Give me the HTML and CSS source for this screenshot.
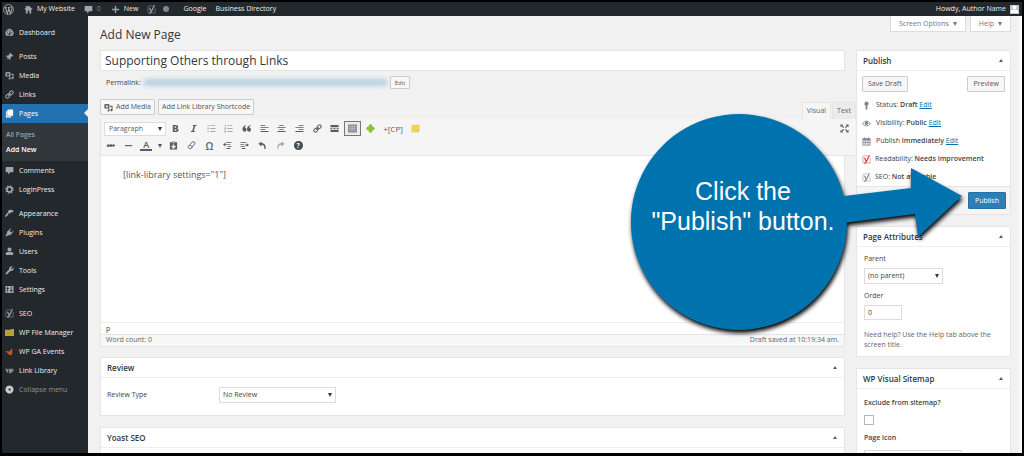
FILE: index.html
```html
<!DOCTYPE html>
<html lang="en">

<head>
    <meta charset="UTF-8">
    <meta name="viewport" content="width=device-width, initial-scale=1.0">
    <title>Add New Page</title>
    <link rel="stylesheet" href="styles.css">
</head>

<body>

    <!-- icons -->
    <svg class="sprite" aria-hidden="true">
        <symbol id="wordpress" viewBox="0 0 20 20"><circle cx="10" cy="10" r="9" fill="none" stroke="currentColor" stroke-width="1.5"/><path d="M3 6.500h4M9 6.500h4M4.500 7l3.500 10L10.500 9.500M10 7l3.500 10L16.500 8.500c.3-1.500-2-2-1.500-4.500" fill="none" stroke="currentColor" stroke-width="2"/></symbol>
        <symbol id="home" viewBox="0 0 20 20"><path d="M10 1l9 8-1.500 1.700L16 9.500V19h-4v-6H8v6H4V9.500l-1.500 1.200L1 9l3-2.700V2h3v1.700z"/></symbol>
        <symbol id="comment" viewBox="0 0 20 20"><path d="M3 2h14q1.500 0 1.500 1.500v9q0 1.500-1.500 1.500h-5l-5 5v-5H3q-1.500 0-1.500-1.500v-9Q1.500 2 3 2z"/></symbol>
        <symbol id="add" viewBox="0 0 20 20"><path d="M8.500 2h3v6.500H18v3h-6.500V18h-3v-6.500H2v-3h6.500z"/></symbol>
        <symbol id="yoast" viewBox="0 0 20 20"><path d="M13 2H5Q2 2 2 5v10q0 3 3 3h13V6" fill="none" stroke="currentColor" stroke-width="1"/><path d="M5.500 6l4 8.500M16.500 0L10 14.500Q8.500 18 5 18" fill="none" stroke="currentColor" stroke-width="2.500"/></symbol>
        <symbol id="dashboard" viewBox="0 0 20 20"><path fill-rule="evenodd" d="M3 17a9 9 0 1 1 14 0zM9 4v2h2V4zM4 10v2h2v-2zm10 0v2h2v-2zM5 6v2h2V6zm9-1l-5 7a2 2 0 1 0 2.500 1z"/></symbol>
        <symbol id="pin" viewBox="0 0 20 20"><path d="M11 1l8 8-2 1-1-1-4 4q1 3-1 5l-4-4-5 4 4-5-4-4q2-2 5-1l4-4-1-1z"/></symbol>
        <symbol id="media" viewBox="0 0 20 20"><path fill-rule="evenodd" d="M1 3h3l1-1h3l1 1h3v9H1zm5.500 2a2.500 2.500 0 1 0 .1 0z"/><path d="M14 6h5v10a2.500 2.500 0 1 1-2-2.500V9h-3zM9 13h3v4a2 2 0 1 1-2-2z"/></symbol>
        <symbol id="link" viewBox="0 0 20 20"><g transform="rotate(-45 10 10)" fill="none" stroke="currentColor" stroke-width="2.200"><rect x="0" y="6.500" width="9.500" height="7" rx="3.500"/><rect x="10.500" y="6.500" width="9.500" height="7" rx="3.500"/><path d="M6 10h8"/></g></symbol>
        <symbol id="page" viewBox="0 0 20 20"><path d="M7 1h11v14H5V3zM2 5h2v11h10v3H2z"/></symbol>
        <symbol id="gear" viewBox="0 0 20 20"><circle cx="10" cy="10" r="5.500" fill="none" stroke="currentColor" stroke-width="3.500"/><circle cx="10" cy="10" r="8" fill="none" stroke="currentColor" stroke-width="3" stroke-dasharray="3.140 3.140"/></symbol>
        <symbol id="brush" viewBox="0 0 20 20"><path d="M8 3q6-3 11 1l-2 4-3-1-5 4-3-4zM5 8l3 4-6 6-2-2z"/></symbol>
        <symbol id="plug" viewBox="0 0 20 20"><path d="M12 1l1.500 1.500L10 6l4 4 3.500-3.500L19 8l-4 4q-3 5-8 4l-4 3-2-2 3-4Q3 8 8 5z"/></symbol>
        <symbol id="user" viewBox="0 0 20 20"><circle cx="10" cy="5.500" r="4.500"/><path d="M2 18v-4q0-3 4-3h8q4 0 4 3v4z"/></symbol>
        <symbol id="wrench" viewBox="0 0 20 20"><path d="M17 1l-4 4 2 2 4-4q1 4-1.500 6.500T12 11l-8 8q-2 0-3-3l8-8q-1-3 1.500-5.500T17 1z"/></symbol>
        <symbol id="sliders" viewBox="0 0 20 20"><path fill-rule="evenodd" d="M1 2h18v16H1zm4 2v3H3v2h2v7h1.500V9h2V7h-2V4zm8 0v7h-2v2h2v3h1.500v-3h2v-2h-2V4z"/></symbol>
        <symbol id="folder" viewBox="0 0 20 16"><path fill="#b9a233" d="M0 2h12l2-2h6v16H0z"/></symbol>
        <symbol id="fox" viewBox="0 0 20 20"><path fill="#c4582d" d="M1 9l9 1 6-8v14l-5 3z"/></symbol>
        <symbol id="library" viewBox="0 0 20 20"><path fill="#7e8c86" d="M1 5l6 2v9L3 13zM8 6h10l1 5-8 6-2-3z"/></symbol>
        <symbol id="collapse" viewBox="0 0 20 20"><path fill-rule="evenodd" d="M10 1a9 9 0 1 1-.1 0zm2 5l-5 4 5 4z"/></symbol>
        <symbol id="key" viewBox="0 0 20 20"><path d="M10 1a5 5 0 0 1 2 9.500V19H8v-8.500A5 5 0 0 1 10 1z"/></symbol>
        <symbol id="eye" viewBox="0 0 20 20"><path fill="none" stroke="currentColor" stroke-width="2" d="M1 10q9-11 18 0-9 11-18 0z"/><circle cx="10" cy="9.500" r="4"/></symbol>
        <symbol id="calendar" viewBox="0 0 20 20"><path fill-rule="evenodd" d="M1 3h3V1h3v2h6V1h3v2h3v16H1zm2 5v3h3V8zm5 0v3h4V8zm6 0v3h3V8zM3 13v4h3v-4zm5 0v4h4v-4zm6 0v4h3v-4z"/></symbol>
        <symbol id="bold" viewBox="0 0 20 20"><path fill-rule="evenodd" d="M4 2h7q5 0 5 4 0 3-2 4 3 1 3 4 0 4-5 4H4zm4 3v3.500h2.500q1.500 0 1.500-1.700T10.500 5zm0 6.500V15h3q1.500 0 1.500-1.700t-1.500-1.800z"/></symbol>
        <symbol id="italic" viewBox="0 0 20 20"><path d="M9 2h8l-.5 2.500H14L10.500 15.500H13L12.500 18H4l.5-2.500H7L10.500 4.500H8z"/></symbol>
        <symbol id="ul" viewBox="0 0 20 20"><path d="M1 2h3v3H1zm6 .5h12v2H7zM1 8.500h3v3H1zM7 9h12v2H7zM1 15h3v3H1zm6 .5h12v2H7z"/></symbol>
        <symbol id="ol" viewBox="0 0 20 20"><path d="M2 1h2v5H2zm5 1.500h12v2H7zM1 8h3v4H1zM7 9h12v2H7zM1 14h3v5H1zm6 1.500h12v2H7z"/></symbol>
        <symbol id="quote" viewBox="0 0 20 20"><path d="M9 2v2Q6 5 6 8q4 0 4 4.500T5.500 17 1 11 9 2zm10 0v2q-3 1-3 4 4 0 4 4.500T15.500 17 11 11 19 2z"/></symbol>
        <symbol id="left" viewBox="0 0 20 20"><path d="M1 2h11v2H1zm0 4.500h18v2H1zM1 11h11v2H1zm0 4.500h18v2H1z"/></symbol>
        <symbol id="center" viewBox="0 0 20 20"><path d="M5 2h10v2H5zM1 6.500h18v2H1zM5 11h10v2H5zm-4 4.500h18v2H1z"/></symbol>
        <symbol id="right" viewBox="0 0 20 20"><path d="M8 2h11v2H8zM1 6.500h18v2H1zM8 11h11v2H8zm-7 4.500h18v2H1z"/></symbol>
        <symbol id="more" viewBox="0 0 20 20"><path d="M1 2h18v5H1zm0 11h18v5H1zM1 9h4v2H1zm7 0h4v2H8zm7 0h4v2h-4z"/></symbol>
        <symbol id="kitchen" viewBox="0 0 20 20"><path fill="#8b9097" d="M0 1h20v18H0z"/><path fill="none" stroke="#c9ccd0" d="M2 6h16M2 10h16M2 14h16M6 3v11M10 3v11M14 3v11"/></symbol>
        <symbol id="clover" viewBox="0 0 20 20"><path fill="#8cbf3a" d="M10 0l4 3v3h3l3 4-3 4h-3v3l-4 3-4-3v-3H3l-3-4 3-4h3V3z"/></symbol>
        <symbol id="note" viewBox="0 0 20 20"><path fill="#f0d35a" d="M1 2l18-1v13l-5 5H1z"/><path fill="#d5b135" d="M19 14h-5v5z"/></symbol>
        <symbol id="hr" viewBox="0 0 20 20"><path d="M2 9h16v2.500H2z"/></symbol>
        <symbol id="paste" viewBox="0 0 20 20"><path fill-rule="evenodd" d="M2 3h4l2-2h4l2 2h4v16H2zm6 0v2h4V3zm0 5v3H5v3h3v3h4v-3h3v-3h-3V8z"/></symbol>
        <symbol id="eraser" viewBox="0 0 20 20"><path fill="none" stroke="currentColor" stroke-width="2" d="M12 2h4l2 3-9 12H5l-3-4zM6 9l6 4"/></symbol>
        <symbol id="outdent" viewBox="0 0 20 20"><path d="M6 2h13v2H6zm4 4.500h6v2h-6zM10 11h9v2h-9zm-2 4.500h8v2H8zM0 8l5-4v3h4v2H5v3z"/></symbol>
        <symbol id="indent" viewBox="0 0 20 20"><path d="M1 2h13v2H1zm0 4.500h8v2H1zM1 11h10v2H1zm3 4.500h8v2H4zM20 9l-5-4v3h-4v2h4v3z"/></symbol>
        <symbol id="undo" viewBox="0 0 20 20"><path d="M1 6l7-5v3.500q10 0 9 13.500h-3q1-9-6-9.500V12z"/></symbol>
        <symbol id="redo" viewBox="0 0 20 20"><path d="M19 6l-7-5v3.500Q2 4.500 3 18h2q0-9 7-9.500V12z"/></symbol>
        <symbol id="full" viewBox="0 0 20 20"><path d="M1 1h6L5 3l4 4-2 2-4-4-2 2zm18 0v6l-2-2-4 4-2-2 4-4-2-2zM1 19v-6l2 2 4-4 2 2-4 4 2 2zm18 0h-6l2-2-4-4 2-2 4 4 2-2z"/></symbol>
    </svg>

    <header class="adminbar">
        <a href="#" aria-label="WordPress"><svg class="wp-logo"><use href="#wordpress"/></svg></a>
        <a href="#" class="site"><svg><use href="#home"/></svg>My Website</a>
        <a href="#" class="count"><svg><use href="#comment"/></svg>0</a>
        <a href="#" class="new"><svg><use href="#add"/></svg>New</a>
        <a href="#" class="seo" aria-label="SEO"><svg><use href="#yoast"/></svg><span class="dot"></span></a>
        <a href="#" class="google">Google</a>
        <a href="#">Business Directory</a>
        <a href="#" class="account">Howdy, Author Name <span class="avatar"><svg><use href="#user"/></svg></span></a>
    </header>

    <div class="wrap">

        <nav class="menu">
            <a href="#"><svg><use href="#dashboard"/></svg>Dashboard</a>
            <hr>
            <a href="#"><svg><use href="#pin"/></svg>Posts</a>
            <a href="#"><svg><use href="#media"/></svg>Media</a>
            <a href="#"><svg><use href="#link"/></svg>Links</a>
            <a href="#" class="current"><svg><use href="#page"/></svg>Pages</a>
            <div class="submenu">
                <a href="#">All Pages</a>
                <a href="#" class="active">Add New</a>
            </div>
            <a href="#"><svg><use href="#comment"/></svg>Comments</a>
            <a href="#"><svg><use href="#gear"/></svg>LoginPress</a>
            <hr>
            <a href="#"><svg><use href="#brush"/></svg>Appearance</a>
            <a href="#"><svg><use href="#plug"/></svg>Plugins</a>
            <a href="#"><svg><use href="#user"/></svg>Users</a>
            <a href="#"><svg><use href="#wrench"/></svg>Tools</a>
            <a href="#"><svg><use href="#sliders"/></svg>Settings</a>
            <hr>
            <a href="#"><svg><use href="#yoast"/></svg>SEO</a>
            <a href="#"><svg><use href="#folder"/></svg>WP File Manager</a>
            <a href="#"><svg><use href="#fox"/></svg>WP GA Events</a>
            <a href="#"><svg><use href="#library"/></svg>Link Library</a>
            <a href="#" class="collapse"><svg><use href="#collapse"/></svg>Collapse menu</a>
        </nav>

        <main class="content">
            <div class="top">
                <h1>Add New Page</h1>
                <div class="screen-links">
                    <button>Screen Options <i class="down"></i></button>
                    <button>Help <i class="down"></i></button>
                </div>
            </div>

            <div class="columns">
                <section class="primary">
                    <input class="title" type="text" aria-label="Title" value="Supporting Others through Links">

                    <div class="permalink">
                        <span>Permalink:</span>
                        <a href="#" class="url" aria-label="Permalink"></a>
                        <button class="btn small">Edit</button>
                    </div>

                    <div class="media-row">
                        <button class="btn"><svg><use href="#media"/></svg>Add Media</button>
                        <button class="btn">Add Link Library Shortcode</button>
                        <div class="tabs">
                            <button class="on">Visual</button>
                            <button>Text</button>
                        </div>
                    </div>

                    <!-- editor -->
                    <div class="editor">
                        <div class="toolbar">
                            <div class="tools">
                                <div class="select format">
                                    <select aria-label="Format"><option>Paragraph</option></select>
                                </div>
                                <div class="group wide">
                                    <button aria-label="Bold"><svg><use href="#bold"/></svg></button>
                                    <button aria-label="Italic"><svg><use href="#italic"/></svg></button>
                                    <button class="light" aria-label="Bulleted list"><svg><use href="#ul"/></svg></button>
                                    <button class="light" aria-label="Numbered list"><svg><use href="#ol"/></svg></button>
                                    <button aria-label="Quote"><svg><use href="#quote"/></svg></button>
                                    <button aria-label="Align left"><svg><use href="#left"/></svg></button>
                                    <button aria-label="Align center"><svg><use href="#center"/></svg></button>
                                    <button aria-label="Align right"><svg><use href="#right"/></svg></button>
                                    <button aria-label="Link"><svg><use href="#link"/></svg></button>
                                    <button aria-label="Read more"><svg><use href="#more"/></svg></button>
                                    <button class="pressed" aria-label="Toolbar toggle"><svg><use href="#kitchen"/></svg></button>
                                    <button aria-label="Insert"><svg><use href="#clover"/></svg></button>
                                </div>
                                <button class="cp">+[CP]</button>
                                <button class="note" aria-label="Note"><svg><use href="#note"/></svg></button>
                                <button class="full" aria-label="Fullscreen"><svg><use href="#full"/></svg></button>
                            </div>
                            <div class="tools">
                                <div class="group three">
                                    <button class="abc">ABC</button>
                                    <button aria-label="Line"><svg><use href="#hr"/></svg></button>
                                    <button class="color">A</button>
                                </div>
                                <button class="caret" aria-label="Colors"><i class="down"></i></button>
                                <div class="group eight">
                                    <button aria-label="Paste"><svg><use href="#paste"/></svg></button>
                                    <button aria-label="Clear"><svg><use href="#eraser"/></svg></button>
                                    <button class="omega">Ω</button>
                                    <button aria-label="Outdent"><svg><use href="#outdent"/></svg></button>
                                    <button aria-label="Indent"><svg><use href="#indent"/></svg></button>
                                    <button aria-label="Undo"><svg><use href="#undo"/></svg></button>
                                    <button class="light" aria-label="Redo"><svg><use href="#redo"/></svg></button>
                                    <button class="help"><span>?</span></button>
                                </div>
                            </div>
                        </div>
                        <textarea aria-label="Content">[link-library settings="1"]</textarea>
                        <div class="path">p</div>
                        <div class="status"><span>Word count: 0</span><span>Draft saved at 10:19:34 am.</span></div>
                    </div>

                    <div class="box">
                        <h2>Review <i class="up"></i></h2>
                        <div class="review">
                            <label for="review">Review Type</label>
                            <div class="select">
                                <select id="review"><option>No Review</option></select>
                            </div>
                        </div>
                    </div>

                    <div class="box">
                        <h2>Yoast SEO <i class="up"></i></h2>
                        <div class="yoast"></div>
                    </div>
                </section>

                <aside class="side">
                    <div class="box">
                        <h2>Publish <i class="up"></i></h2>
                        <div class="publish">
                            <div class="buttons">
                                <button class="btn">Save Draft</button>
                                <button class="btn">Preview</button>
                            </div>
                            <p><svg><use href="#key"/></svg><span>Status: <b>Draft</b> <a href="#">Edit</a></span></p>
                            <p><svg><use href="#eye"/></svg><span>Visibility: <b>Public</b> <a href="#">Edit</a></span></p>
                            <p><svg><use href="#calendar"/></svg><span>Publish <b>immediately</b> <a href="#">Edit</a></span></p>
                            <p class="score bad"><svg><use href="#yoast"/></svg><span>Readability: <b>Needs improvement</b></span></p>
                            <p class="score"><svg><use href="#yoast"/></svg><span>SEO: <b>Not available</b></span></p>
                        </div>
                        <div class="actions"><button class="btn primary-btn">Publish</button></div>
                    </div>

                    <div class="box">
                        <h2>Page Attributes <i class="up"></i></h2>
                        <div class="attributes">
                            <label for="parent">Parent</label>
                            <div class="select">
                                <select id="parent"><option>(no parent)</option></select>
                            </div>
                            <label for="order">Order</label>
                            <input id="order" type="text" value="0">
                            <p>Need help? Use the Help tab above the screen title.</p>
                        </div>
                    </div>

                    <div class="box">
                        <h2>WP Visual Sitemap <i class="up"></i></h2>
                        <div class="sitemap">
                            <label for="exclude">Exclude from sitemap?</label>
                            <input id="exclude" type="checkbox">
                            <label for="icon">Page icon</label>
                            <input id="icon" type="text">
                        </div>
                    </div>
                </aside>
            </div>
        </main>
    </div>

    <!-- callout on top of the page -->
    <div class="callout">
        <svg viewBox="0 0 340 224">
            <path d="M108 2a108 108 0 1 1-.1 0zM205 85l75-9V56l51 28-44 41-3-23-72 9z"/>
        </svg>
        <div class="callout-text">Click the<br>"Publish" button.</div>
    </div>

</body>

</html>
```
FILE: styles.css
```css
* {
    box-sizing: border-box;
}

body {
    margin: 0;
    height: 100vh;
    border: 2px solid #000;
    border-bottom-width: 3px;
    overflow: hidden;
    position: relative;
    display: flex;
    flex-direction: column;
    background-color: #f1f1f1;
    color: #444;
    font-family: "Open Sans", "Noto Sans", sans-serif;
    font-size: 7px;
    line-height: 10px;
}

svg {
    width: 9px;
    height: 9px;
    fill: currentColor;
    flex-shrink: 0;
}

.sprite {
    position: absolute;
    width: 0;
    height: 0;
}

a {
    color: #0073aa;
}

button,
input,
select,
textarea {
    font: inherit;
    color: inherit;
    margin: 0;
}

button {
    padding: 0;
    border: none;
    background: none;
    white-space: nowrap;
}

/* admin bar */
.adminbar {
    height: 14px;
    flex-shrink: 0;
    display: flex;
    align-items: center;
    padding: 0 3px 0 1px;
    background-color: #23282d;
    color: #eee;
}

.adminbar a {
    display: flex;
    align-items: center;
    gap: 4px;
    color: #eee;
    text-decoration: none;
}

.adminbar svg {
    color: #a0a5aa;
}

.adminbar .wp-logo {
    width: 11px;
    height: 11px;
}

.adminbar .site {
    margin-left: 10px;
}

.adminbar .count {
    margin-left: 9px;
    color: #888;
}

.adminbar .new {
    margin-left: 10px;
}

.adminbar .seo {
    margin-left: 9px;
    gap: 7px;
}

.dot {
    width: 6px;
    height: 6px;
    border-radius: 50%;
    background-color: #82878c;
}

.adminbar .google {
    margin: 0 9px 0 14px;
}

.adminbar .account {
    margin-left: auto;
}

.avatar {
    width: 9px;
    height: 9px;
    display: flex;
    background-color: #c4c4c4;
}

.adminbar .avatar svg {
    color: #fff;
}

.wrap {
    flex: 1;
    min-height: 0;
    display: flex;
    overflow: hidden;
}

/* left menu */
.menu {
    width: 86px;
    flex-shrink: 0;
    padding-top: 7px;
    background-color: #23282d;
}

.menu hr {
    height: 5px;
    margin: 0;
    border: none;
}

.menu a {
    display: flex;
    align-items: center;
    gap: 5px;
    height: 19px;
    padding-left: 3px;
    color: #eee;
    text-decoration: none;
}

.menu svg {
    color: #a0a5aa;
}

.menu .current {
    position: relative;
    background-color: #2271b1;
    color: #fff;
}

.menu .current svg {
    color: #fff;
}

.menu .current::after {
    content: "";
    position: absolute;
    right: 0;
    top: 5px;
    border: 4px solid transparent;
    border-right-color: #f1f1f1;
    border-left: none;
}

.submenu {
    padding: 4px 0;
    background-color: #32373c;
}

.menu .submenu a {
    height: 15px;
    padding-left: 4px;
    color: #b4b9be;
}

.menu .submenu .active {
    color: #fff;
    font-weight: 600;
}

.menu .collapse {
    color: #8e9398;
}

.menu .collapse svg {
    color: #ccc;
}

/* content */
.content {
    flex: 1;
    min-width: 0;
    padding: 0 8px 0 12px;
    border-right: 3px solid #fafafa;
    overflow: hidden;
}

.top {
    display: flex;
    justify-content: space-between;
    height: 34px;
}

h1 {
    margin: 10px 0 0;
    font-size: 12px;
    line-height: 18px;
    font-weight: 400;
    color: #32373c;
}

.screen-links {
    display: flex;
    gap: 4px;
}

.screen-links button {
    display: flex;
    align-items: center;
    gap: 4px;
    height: 16px;
    padding: 0 8px;
    border: 1px solid #ddd;
    border-top: none;
    background-color: #fff;
    color: #72777c;
}

.down,
.up {
    border: 2px solid transparent;
    border-top: 4px solid currentColor;
    border-bottom: none;
}

.up {
    border-top: none;
    border-bottom: 3px solid #555d66;
}

.columns {
    display: flex;
    gap: 11px;
}

.primary {
    flex: 1;
    min-width: 0;
}

.side {
    width: 155px;
    flex-shrink: 0;
}

.title {
    display: block;
    width: 100%;
    height: 21px;
    padding: 0 4px;
    border: 1px solid #e5e5e5;
    background-color: #fff;
    color: #32373c;
    font-size: 12px;
}

.permalink {
    display: flex;
    align-items: center;
    gap: 3px;
    height: 23px;
    padding-left: 6px;
}

.url {
    width: 243px;
    height: 7px;
    background-color: #b9d2e2;
    filter: blur(2px);
}

.btn {
    display: flex;
    align-items: center;
    justify-content: center;
    gap: 3px;
    height: 16px;
    padding: 0 3px;
    border: 1px solid #ccc;
    border-radius: 1px;
    background-color: #f7f7f7;
    color: #555;
}

.btn.small {
    height: 13px;
    padding: 0 4px;
    font-size: 6px;
}

.media-row {
    display: flex;
    align-items: flex-start;
    gap: 3px;
    height: 25px;
    padding-top: 5px;
}

.tabs {
    display: flex;
    align-self: flex-end;
    gap: 1px;
    margin-left: auto;
    margin-right: -11px;
}

.tabs button {
    height: 17px;
    padding: 0 4px;
    border: 1px solid #e5e5e5;
    border-bottom: none;
    background-color: #ebebeb;
    color: #666;
}

.tabs .on {
    background-color: #f5f5f5;
}

/* editor */
.editor {
    border: 1px solid #e5e5e5;
    border-top: none;
    margin-bottom: 10px;
}

.toolbar {
    margin-right: -11px;
    padding: 1px 0;
    border-bottom: 1px solid #e5e5e5;
    background-color: #f5f5f5;
}

.tools {
    display: flex;
    align-items: center;
    height: 17px;
    color: #555d66;
    padding-left: 1px;
}

.tools button {
    display: flex;
    align-items: center;
    justify-content: center;
    height: 16px;
}

.tools .light {
    color: #a5a9ad;
}

.group {
    display: grid;
    grid-auto-flow: column;
    grid-auto-columns: 1fr;
}

.wide {
    width: 212px;
}

.three {
    width: 53px;
}

.eight {
    width: 142px;
}

.tools .pressed {
    height: 15px;
    border: 1px solid #72777c;
    background-color: #ebebeb;
}

.tools .cp {
    width: 28px;
    font-size: 8px;
}

.tools .note {
    width: 16px;
}

.tools .full {
    margin-left: auto;
    margin-right: 6px;
}

.tools .caret {
    width: 10px;
}

.tools .abc {
    font-size: 4px;
    font-weight: 700;
    text-decoration: line-through;
}

.tools .color {
    height: 10px;
    align-self: center;
    margin: 0 3px;
    border-bottom: 2px solid #555d66;
    font-size: 9px;
    font-weight: 600;
}

.tools .omega {
    font-size: 10px;
    font-weight: 600;
}

.help span {
    width: 9px;
    height: 9px;
    border-radius: 50%;
    background-color: #444a50;
    color: #fff;
    font-weight: 700;
    line-height: 9px;
}

.select {
    position: relative;
}

.select select {
    appearance: none;
    display: block;
    width: 100%;
    height: 16px;
    padding: 0 3px;
    border: 1px solid #ddd;
    border-radius: 0;
    background-color: #fff;
}

.select::after {
    content: "";
    position: absolute;
    right: 4px;
    top: 6px;
    border: 2px solid transparent;
    border-top: 4px solid #32373c;
    border-bottom: none;
}

.format {
    width: 62px;
    margin: 0 1px 0 2px;
}

.format select {
    height: 14px;
    padding-left: 4px;
}

.format::after {
    top: 5px;
}

.editor textarea {
    display: block;
    width: 100%;
    height: 166px;
    padding: 12px 22px;
    border: none;
    resize: none;
    background-color: #fff;
    color: #555;
    font-size: 9px;
    line-height: 13px;
}

.path {
    height: 12px;
    padding: 1px 5px;
    border-top: 1px solid #eee;
    background-color: #fff;
}

.status {
    display: flex;
    justify-content: space-between;
    height: 12px;
    padding: 0 5px;
    border-top: 1px solid #e5e5e5;
    background-color: #f7f7f7;
    color: #666;
}

/* boxes */
.box {
    margin-bottom: 11px;
    border: 1px solid #e5e5e5;
    background-color: #fff;
}

.box h2 {
    display: flex;
    align-items: center;
    justify-content: space-between;
    height: 20px;
    margin: 0;
    padding: 0 7px 0 6px;
    border-bottom: 1px solid #eee;
    color: #32373c;
    font-size: 8px;
    font-weight: 600;
}

.review {
    display: flex;
    align-items: center;
    height: 37px;
    padding: 0 6px 4px;
}

.review label {
    width: 112px;
}

.review .select {
    width: 117px;
}

.yoast {
    height: 20px;
}

.publish {
    height: 115px;
    padding: 5px 5px 0;
}

.buttons {
    display: flex;
    justify-content: space-between;
    margin-bottom: 4px;
}

.buttons .btn {
    padding: 0 5px;
}

.publish p {
    display: flex;
    align-items: center;
    gap: 5px;
    height: 18px;
    margin: 0;
}

.publish svg {
    color: #82878c;
}

.publish .score {
    gap: 4px;
}

.publish .bad svg {
    color: #dc3232;
}

.publish b {
    font-weight: 600;
}

.actions {
    display: flex;
    justify-content: flex-end;
    padding: 5px 4px;
    border-top: 1px solid #e5e5e5;
    background-color: #f5f5f5;
}

.btn.primary-btn {
    height: 17px;
    padding: 0 6px;
    border-color: #2271a8;
    background-color: #2e7fb8;
    color: #fff;
}

.attributes,
.sitemap {
    padding: 8px 7px 6px;
}

.attributes {
    padding-top: 6px;
}

.attributes label,
.sitemap label {
    display: block;
    line-height: 12px;
}

.sitemap label {
    font-weight: 600;
}

.attributes .select {
    width: 79px;
    margin: 3px 0 6px;
}

.attributes input {
    display: block;
    width: 38px;
    height: 15px;
    margin: 3px 0 10px;
    padding: 0 3px;
    border: 1px solid #ddd;
}

.attributes p {
    margin: 0;
    color: #666;
}

.sitemap input {
    display: block;
    width: 98px;
    height: 15px;
    border: 1px solid #ddd;
}

.sitemap input[type="checkbox"] {
    appearance: none;
    width: 10px;
    height: 10px;
    margin: 6px 0 7px;
    border-color: #b4b9be;
    background-color: #fff;
}

.sitemap label + input[type="text"] {
    margin-top: 6px;
}

/* callout */
.callout {
    position: absolute;
    top: 110px;
    right: 51px;
    width: 340px;
    pointer-events: none;
}

.callout svg {
    display: block;
    width: 340px;
    height: 224px;
    overflow: visible;
    fill: #0073ae;
    filter: drop-shadow(1px 3px 2px #000);
}

.callout-text {
    position: absolute;
    top: 64px;
    left: 0;
    width: 224px;
    color: #fff;
    font-family: "Liberation Sans", Arial, sans-serif;
    font-size: 25px;
    line-height: 30px;
    text-align: center;
}
```
